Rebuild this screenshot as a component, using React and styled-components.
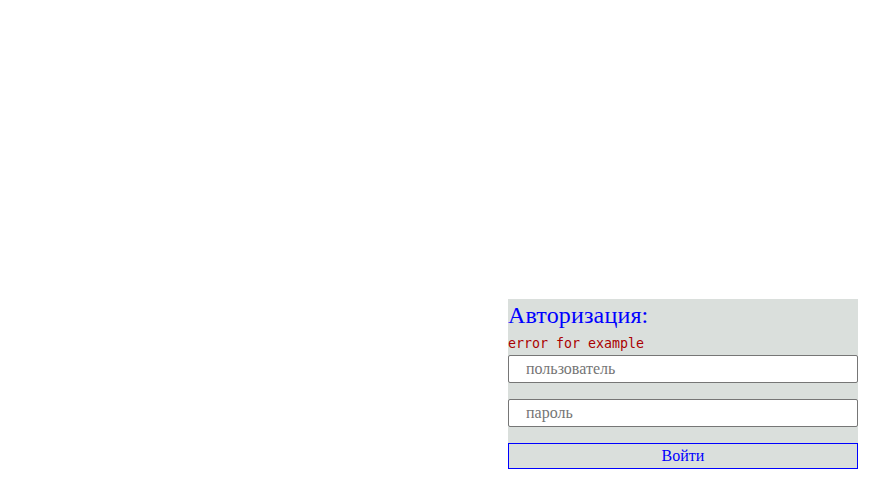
import React from "react";
import styled, { createGlobalStyle } from "styled-components";

const GlobalStyle = createGlobalStyle`
  html, body {
    margin: 0;
    padding: 0;
    background: #ffffff;
  }
`;

const Page = styled.div`
  box-sizing: border-box;
  min-height: 100vh;
  display: flex;
  justify-content: flex-end;
  align-items: flex-end;
  padding: 0 16px 16px 0;
`;

const Form = styled.form`
  width: 350px;
  display: flex;
  flex-direction: column;
  background: #dadfdc;
  font-family: "Liberation Serif", "Times New Roman", serif;
`;

const Title = styled.h2`
  margin: 0;
  font-size: 24px;
  font-weight: 400;
  line-height: 33px;
  letter-spacing: 0.15px;
  color: #0000ff;
`;

const Error = styled.div`
  font-family: "DejaVu Sans Mono", monospace;
  font-size: 13.3px;
  line-height: 23px;
  color: #aa0000;
`;

const Input = styled.input`
  box-sizing: border-box;
  width: 100%;
  height: 27.5px;
  margin: 0 0 16.5px;
  padding: 0 0 0 17px;
  border: 1px solid #767676;
  border-radius: 2px;
  background: #ffffff;
  font-family: "Liberation Serif", "Times New Roman", serif;
  font-size: 16px;
  color: #222;
  outline: none;

  &::placeholder {
    color: #757575;
  }
`;

const Button = styled.button`
  box-sizing: border-box;
  width: 100%;
  height: 26px;
  padding: 0;
  border: 1px solid #0000ff;
  background: #dadfdc;
  font-family: "Liberation Serif", "Times New Roman", serif;
  font-size: 16px;
  color: #0000ff;
  cursor: pointer;
`;

export default function App() {
  return (
    <>
      <GlobalStyle />
      <Page>
        <Form onSubmit={(e) => e.preventDefault()}>
          <Title>Авторизация:</Title>
          <Error>error for example</Error>
          <Input type="text" placeholder="пользователь" />
          <Input type="password" placeholder="пароль" />
          <Button type="submit">Войти</Button>
        </Form>
      </Page>
    </>
  );
}
